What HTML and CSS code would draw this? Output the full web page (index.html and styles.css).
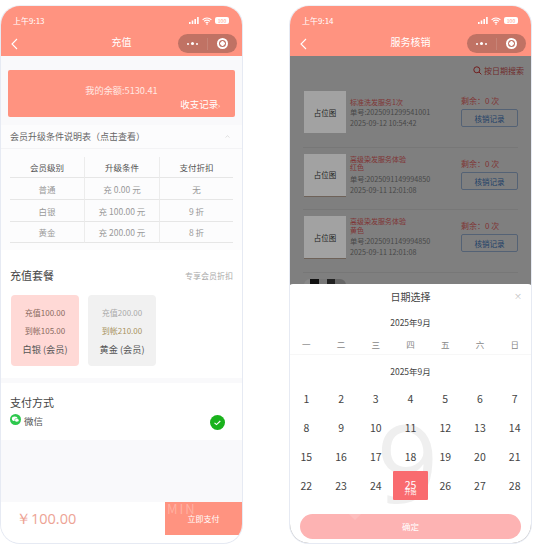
FILE: index.html
```html
<!DOCTYPE html>
<html>
<head>
  <title>充值 / 服务核销</title>
  <link rel="stylesheet" href="styles.css">
</head>
<body>
  <!-- Recharge screen -->
  <div class="phone">
    <div class="top-bar">
      <div class="status">
        <span>上午9:13</span>
        <span class="status-icons">
          <svg width="10" height="7" viewBox="0 0 10 7"><rect x="0" y="5" width="1.6" height="2"/><rect x="2.7" y="3.5" width="1.6" height="3.5"/><rect x="5.4" y="2" width="1.6" height="5"/><rect x="8.1" y="0" width="1.6" height="7"/></svg>
          <svg width="10" height="8" viewBox="0 0 10 8"><path d="M.6 2.8a6.2 6.2 0 0 1 8.8 0M2.1 4.4a4 4 0 0 1 5.8 0M3.6 5.9a2 2 0 0 1 2.8 0" fill="none" stroke="#fff" stroke-width="1.1"/><circle cx="5" cy="7.1" r=".8"/></svg>
          <span class="battery">100</span>
        </span>
      </div>
      <div class="nav">
        <svg class="back" width="7" height="12" viewBox="0 0 7 12"><path d="M6 1 1 6l5 5" fill="none" stroke="#fff" stroke-width="1.1"/></svg>
        <span class="nav-title">充值</span>
        <div class="capsule">
          <span class="dots"><i></i><b></b><i></i></span>
          <span class="capsule-line"></span>
          <span class="ring"></span>
        </div>
      </div>
    </div>

    <div class="content">
      <div class="balance-wrap">
        <div class="balance">
          <div class="balance-num">我的余额:5130.41</div>
          <div class="balance-link">收支记录<span class="tiny-arrow">›</span></div>
        </div>
      </div>

      <div class="rule-head">
        <span>会员升级条件说明表（点击查看）</span>
        <svg width="5" height="3" viewBox="0 0 5 3"><path d="M.5 2.5 2.5.7l2 1.8" fill="none" stroke="#ccc" stroke-width=".6"/></svg>
      </div>
      <div class="rule-body">
        <div class="rule-table">
          <div class="cell head">会员级别</div><div class="cell head">升级条件</div><div class="cell head">支付折扣</div>
          <div class="cell">普通</div><div class="cell">充 0.00 元</div><div class="cell">无</div>
          <div class="cell">白银</div><div class="cell">充 100.00 元</div><div class="cell">9 折</div>
          <div class="cell">黄金</div><div class="cell">充 200.00 元</div><div class="cell">8 折</div>
        </div>
      </div>

      <div class="panel packages">
        <div class="panel-head">
          <span class="panel-title">充值套餐</span>
          <span class="panel-note">专享会员折扣</span>
        </div>
        <div class="package-list">
          <div class="package active">
            <div class="pk-line">充值100.00</div>
            <div class="pk-line">到帐105.00</div>
            <div class="pk-name">白银 (会员)</div>
          </div>
          <div class="package">
            <div class="pk-line muted">充值200.00</div>
            <div class="pk-line gold">到帐210.00</div>
            <div class="pk-name">黄金 (会员)</div>
          </div>
        </div>
      </div>

      <div class="panel pay">
        <div class="panel-title">支付方式</div>
        <div class="pay-row">
          <svg class="wx" width="11" height="11" viewBox="0 0 11 11"><circle cx="5.5" cy="5.5" r="5.5" fill="#2dc84d"/><ellipse cx="4.7" cy="4.7" rx="2.8" ry="2.3" fill="#fff"/><ellipse cx="6.8" cy="6.2" rx="2.2" ry="1.8" fill="#fff" stroke="#2dc84d" stroke-width=".5"/></svg>
          <span class="pay-name">微信</span>
          <svg class="check" width="15" height="15" viewBox="0 0 15 15"><circle cx="7.5" cy="7.5" r="7.5" fill="#19b21c"/><path d="m4.5 7.8 2 1.8 3.8-3.6" fill="none" stroke="#fff" stroke-width="1.1"/></svg>
        </div>
      </div>

      <div class="footer">
        <span class="price">￥100.00</span>
        <div class="pay-btn">
          <span class="ghost">MIN</span>
          立即支付
        </div>
      </div>
    </div>
  </div>

  <!-- Write-off screen with date sheet open -->
  <div class="phone">
    <div class="top-bar">
      <div class="status">
        <span>上午9:14</span>
        <span class="status-icons">
          <svg width="10" height="7" viewBox="0 0 10 7"><rect x="0" y="5" width="1.6" height="2"/><rect x="2.7" y="3.5" width="1.6" height="3.5"/><rect x="5.4" y="2" width="1.6" height="5"/><rect x="8.1" y="0" width="1.6" height="7"/></svg>
          <svg width="10" height="8" viewBox="0 0 10 8"><path d="M.6 2.8a6.2 6.2 0 0 1 8.8 0M2.1 4.4a4 4 0 0 1 5.8 0M3.6 5.9a2 2 0 0 1 2.8 0" fill="none" stroke="#fff" stroke-width="1.1"/><circle cx="5" cy="7.1" r=".8"/></svg>
          <span class="battery">100</span>
        </span>
      </div>
      <div class="nav">
        <svg class="back" width="7" height="12" viewBox="0 0 7 12"><path d="M6 1 1 6l5 5" fill="none" stroke="#fff" stroke-width="1.1"/></svg>
        <span class="nav-title">服务核销</span>
        <div class="capsule">
          <span class="dots"><i></i><b></b><i></i></span>
          <span class="capsule-line"></span>
          <span class="ring"></span>
        </div>
      </div>
    </div>

    <div class="content list-page">
      <div class="search-row">
        <svg width="9" height="9" viewBox="0 0 9 9"><circle cx="3.8" cy="3.8" r="3" fill="none" stroke="#e23b3b" stroke-width="1"/><path d="m6 6 2.4 2.4" stroke="#e23b3b" stroke-width="1"/></svg>
        按日期搜索
      </div>

      <div class="order">
        <div class="thumb">占位图</div>
        <div class="order-info">
          <div class="order-name one">标准洗发服务1次</div>
          <div class="order-meta">单号:2025091299541001</div>
          <div class="order-meta">2025-09-12 10:54:42</div>
        </div>
        <div class="order-side">
          <div class="remain">剩余：0 次</div>
          <div class="record-btn">核销记录</div>
        </div>
      </div>

      <div class="order">
        <div class="thumb peek">占位图</div>
        <div class="order-info">
          <div class="order-name">高级染发服务体验<br>红色</div>
          <div class="order-meta">单号:2025091149994850</div>
          <div class="order-meta">2025-09-11 12:01:08</div>
        </div>
        <div class="order-side">
          <div class="remain">剩余：0 次</div>
          <div class="record-btn">核销记录</div>
        </div>
      </div>

      <div class="order">
        <div class="thumb peek">占位图</div>
        <div class="order-info">
          <div class="order-name">高级染发服务体验<br>黄色</div>
          <div class="order-meta">单号:2025091149994850</div>
          <div class="order-meta">2025-09-11 12:01:08</div>
        </div>
        <div class="order-side">
          <div class="remain">剩余：0 次</div>
          <div class="record-btn">核销记录</div>
        </div>
      </div>

      <div class="order">
        <div class="thumb photo"></div>
        <div class="order-info"></div>
        <div class="order-side">
          <div class="remain">剩余：0 次</div>
        </div>
      </div>

      <div class="dim"></div>

      <div class="sheet">
        <div class="sheet-title">日期选择<span class="close">×</span></div>
        <div class="month">2025年9月</div>
        <div class="week">
          <span>一</span><span>二</span><span>三</span><span>四</span><span>五</span><span>六</span><span>日</span>
        </div>
        <div class="month second">2025年9月</div>
        <div class="days">
          <span class="bg-num">9</span>
          <span>1</span><span>2</span><span>3</span><span>4</span><span>5</span><span>6</span><span>7</span>
          <span>8</span><span>9</span><span>10</span><span>11</span><span>12</span><span>13</span><span>14</span>
          <span>15</span><span>16</span><span>17</span><span>18</span><span>19</span><span>20</span><span>21</span>
          <span>22</span><span>23</span><span>24</span><span class="picked">25<small>开始</small></span><span>26</span><span>27</span><span>28</span>
        </div>
        <div class="ok-btn">确定</div>
      </div>
    </div>
  </div>
</body>
</html>
```

FILE: styles.css
```css
body {
  margin: 0;
  padding: 5px 0 0;
  background: #fff;
  display: flex;
  gap: 46px;
  font-family: "Noto Sans CJK SC", "Noto Sans", sans-serif;
  overflow: hidden;
}

.phone {
  width: 243px;
  height: 539px;
  box-sizing: border-box;
  border: 1px solid #e6eaf3;
  border-top-color: #eef0f5;
  border-radius: 20px;
  overflow: hidden;
  display: flex;
  flex-direction: column;
  background: #f9f9fb;
}

/* Header */
.top-bar {
  height: 50px;
  flex: none;
  background: #ff9380;
  color: #fff;
}

.status {
  height: 25px;
  padding: 4px 13px 0 12px;
  box-sizing: border-box;
  display: flex;
  justify-content: space-between;
  align-items: center;
  font-size: 8px;
  color: #fff;
}

.status-icons {
  display: flex;
  align-items: center;
  gap: 3px;
  fill: #fff;
}

.battery {
  width: 14px;
  height: 7px;
  line-height: 7px;
  background: #fff;
  color: #ff9380;
  border-radius: 2px;
  font-size: 5px;
  text-align: center;
}

.nav {
  height: 25px;
  display: flex;
  align-items: center;
  position: relative;
  padding: 0 5px 4px 10px;
}

.nav-title {
  position: absolute;
  left: 0;
  right: 0;
  top: 4px;
  text-align: center;
  font-size: 10px;
  line-height: 14px;
  color: #fff;
}

.back {
  flex: none;
}

.capsule {
  margin-left: auto;
  width: 59px;
  height: 19px;
  border-radius: 10px;
  background: rgba(90, 60, 55, 0.38);
  display: flex;
  align-items: center;
  position: relative;
  z-index: 1;
}

.dots {
  width: 29px;
  display: flex;
  justify-content: center;
  align-items: center;
  gap: 2px;
}

.dots i {
  width: 2px;
  height: 2px;
  border-radius: 50%;
  background: #fff;
}

.dots b {
  width: 3px;
  height: 3px;
  border-radius: 50%;
  background: #fff;
}

.capsule-line {
  width: 1px;
  height: 12px;
  background: rgba(255, 255, 255, 0.12);
}

.ring {
  margin-left: 9px;
  width: 7px;
  height: 7px;
  border: 2px solid #fff;
  border-radius: 50%;
  background: radial-gradient(circle, #fff 0 2px, transparent 2.5px);
}

.content {
  flex: 1;
  display: flex;
  flex-direction: column;
  min-height: 0;
}

/* Balance */
.balance-wrap {
  padding: 14px 7px 8px;
}

.balance {
  height: 47px;
  box-sizing: border-box;
  background: #ff9380;
  border-radius: 2px;
  color: #fff;
  padding-top: 14px;
}

.balance-num {
  font-size: 9.2px;
  line-height: 13px;
  text-align: center;
  color: #ffe9e4;
}

.balance-link {
  font-size: 9.5px;
  line-height: 14px;
  text-align: right;
  padding-right: 15px;
}

.tiny-arrow {
  font-size: 6px;
}

/* Upgrade rules */
.rule-head {
  height: 24px;
  padding: 0 12px 0 9px;
  display: flex;
  justify-content: space-between;
  align-items: center;
  background: #fcfcfd;
  border-bottom: 1px solid #f3f3f5;
  box-sizing: border-box;
  font-size: 9px;
  color: #666;
}

.rule-body {
  height: 101px;
  box-sizing: border-box;
  padding: 8px 9px 0;
  background: #fcfcfd;
}

.rule-table {
  display: grid;
  grid-template-columns: 75px 75px 73px;
  grid-template-rows: 21px 21.5px 22px 21px;
}

.cell {
  display: flex;
  align-items: center;
  justify-content: center;
  padding-top: 1px;
  border-bottom: 1px solid #e6e6e6;
  font-size: 8.5px;
  color: #999;
}

.cell:nth-child(3n + 1),
.cell:nth-child(3n + 2) {
  border-right: 1px solid #ececec;
}

.cell.head {
  color: #555;
  padding-top: 0;
}

/* Panels */
.panel {
  background: #fff;
  padding: 0 9px;
}

.packages {
  height: 128px;
  box-sizing: border-box;
  padding-top: 16px;
  margin-bottom: 5px;
}

.panel-head {
  display: flex;
  justify-content: space-between;
  align-items: center;
  height: 18px;
}

.panel-title {
  font-size: 11px;
  line-height: 18px;
  color: #444;
}

.panel-note {
  font-size: 8px;
  color: #aaa;
}

.package-list {
  display: flex;
  gap: 9px;
  padding: 11px 1px 0;
}

.package {
  width: 68px;
  height: 71px;
  box-sizing: border-box;
  padding-top: 9px;
  background: #f1f1f1;
  border-radius: 4px;
  text-align: center;
}

.package.active {
  background: #ffd9d6;
}

.pk-line {
  font-size: 8px;
  line-height: 17.5px;
  color: #8a6a60;
}

.pk-line.muted {
  color: #aaa;
}

.pk-line.gold {
  color: #a8935e;
}

.pk-name {
  font-size: 9.2px;
  line-height: 20px;
  color: #555;
}

.pay {
  height: 57px;
  box-sizing: border-box;
  padding-top: 10px;
}

.pay-row {
  display: flex;
  align-items: center;
  height: 20px;
}

.wx {
  margin-top: -4px;
}

.pay-name {
  margin-left: 3px;
  font-size: 9.5px;
  color: #555;
}

.check {
  margin-left: auto;
  margin-right: 8px;
  margin-top: 2px;
}

/* Bottom bar */
.footer {
  margin-top: auto;
  height: 41px;
  flex: none;
  background: #fff;
  display: flex;
  align-items: flex-start;
  justify-content: space-between;
}

.price {
  margin: 7px 0 0 15px;
  font-family: "Open Sans", "Noto Sans", sans-serif;
  font-size: 14.5px;
  line-height: 20px;
  color: #eda394;
}

.pay-btn {
  width: 77px;
  height: 33px;
  background: #ff9380;
  color: #fff;
  font-size: 8px;
  display: flex;
  align-items: center;
  justify-content: center;
  position: relative;
}

.ghost {
  position: absolute;
  left: 2px;
  top: 0;
  font-size: 13px;
  line-height: 14px;
  letter-spacing: 2px;
  color: rgba(255, 255, 255, 0.28);
}

/* Order list */
.list-page {
  position: relative;
  background: #fff;
  overflow: hidden;
}

.search-row {
  height: 29px;
  flex: none;
  box-sizing: border-box;
  padding-right: 7px;
  display: flex;
  justify-content: flex-end;
  align-items: center;
  gap: 2px;
  font-size: 8px;
  color: #e25a5a;
}

.order {
  height: 62.5px;
  flex: none;
  box-sizing: border-box;
  margin: 0 13px;
  padding-top: 6px;
  display: flex;
  border-bottom: 1px solid #eee;
}

.thumb {
  width: 42px;
  height: 42px;
  flex: none;
  margin-left: 1px;
  background: #a2a2a2;
  color: #222;
  font-size: 7.5px;
  display: flex;
  align-items: center;
  justify-content: center;
  position: relative;
  z-index: 1;
}

.thumb.peek {
  border-bottom: 1px solid #6e6259;
}

.thumb.photo {
  border-radius: 6px 6px 0 0;
  background: linear-gradient(90deg, #888 0 15%, #111 15% 35%, #777 35% 55%, #222 55% 75%, #666 75%);
}

.order-info {
  margin-left: 4px;
  width: 113px;
  font-size: 7px;
  line-height: 9px;
  padding-top: 1px;
}

.order-name {
  color: #ff6b6b;
  margin-bottom: 2px;
  font-size: 7px;
  line-height: 8.5px;
}

.order-name.one {
  margin: 6px 0 0;
}

.order-meta {
  color: #8f8f8f;
  line-height: 11px;
  font-size: 7.2px;
}

.order-side {
  width: 58px;
  padding-top: 4px;
}

.remain {
  font-size: 8px;
  line-height: 12px;
  color: #ff6b6b;
  margin-bottom: 2px;
}

.record-btn {
  height: 18px;
  line-height: 17px;
  box-sizing: border-box;
  border: 1px solid #a9c4ea;
  border-radius: 2px;
  font-size: 7.5px;
  color: #3f7fd0;
  text-align: center;
}

.dim {
  position: absolute;
  inset: 0;
  background: rgba(0, 0, 0, 0.5);
}

/* Date sheet */
.sheet {
  position: absolute;
  left: -1px;
  right: -1px;
  bottom: 0;
  height: 259px;
  background: #fff;
  border-radius: 4px 4px 0 0;
  display: flex;
  flex-direction: column;
  z-index: 2;
}

.sheet-title {
  height: 26px;
  line-height: 26px;
  text-align: center;
  font-size: 10px;
  color: #444;
  position: relative;
}

.close {
  position: absolute;
  right: 10px;
  top: -1px;
  font-size: 8px;
  color: #bbb;
}

.month {
  height: 23px;
  line-height: 24px;
  text-align: center;
  font-size: 8.5px;
  color: #444;
}

.week {
  display: grid;
  grid-template-columns: repeat(7, 1fr);
  height: 21px;
  line-height: 22px;
  text-align: center;
  font-size: 8.5px;
  color: #888;
  border-bottom: 1px solid #f7f7f7;
}

.month.second {
  height: 29px;
  line-height: 33px;
}

.days {
  display: grid;
  grid-template-columns: repeat(7, 1fr);
  grid-auto-rows: 29px;
  text-align: center;
  font-size: 10.5px;
  color: #444;
  position: relative;
}

.days > span {
  line-height: 29px;
  position: relative;
}

.days > .bg-num {
  position: absolute;
  left: 0;
  right: 6px;
  top: 33px;
  font-family: "Open Sans", sans-serif;
  font-size: 108px;
  line-height: 90px;
  color: #efefef;
}

.days > .picked {
  background: #f96b6f;
  color: #fff;
  border-radius: 1px;
  line-height: 28px;
}

.picked small {
  position: absolute;
  left: 0;
  right: 0;
  top: 16px;
  font-size: 6px;
  line-height: 10px;
}

.ok-btn {
  margin: 14px 11px 0;
  height: 25px;
  line-height: 25px;
  border-radius: 13px;
  background: #fdb3b3;
  color: #fff;
  font-size: 8.5px;
  text-align: center;
  position: relative;
  overflow: hidden;
}

.ok-btn::before {
  content: "";
  position: absolute;
  left: 50px;
  top: -6px;
  width: 10px;
  height: 10px;
  transform: rotate(45deg);
  background: rgba(255, 255, 255, 0.14);
}
```
